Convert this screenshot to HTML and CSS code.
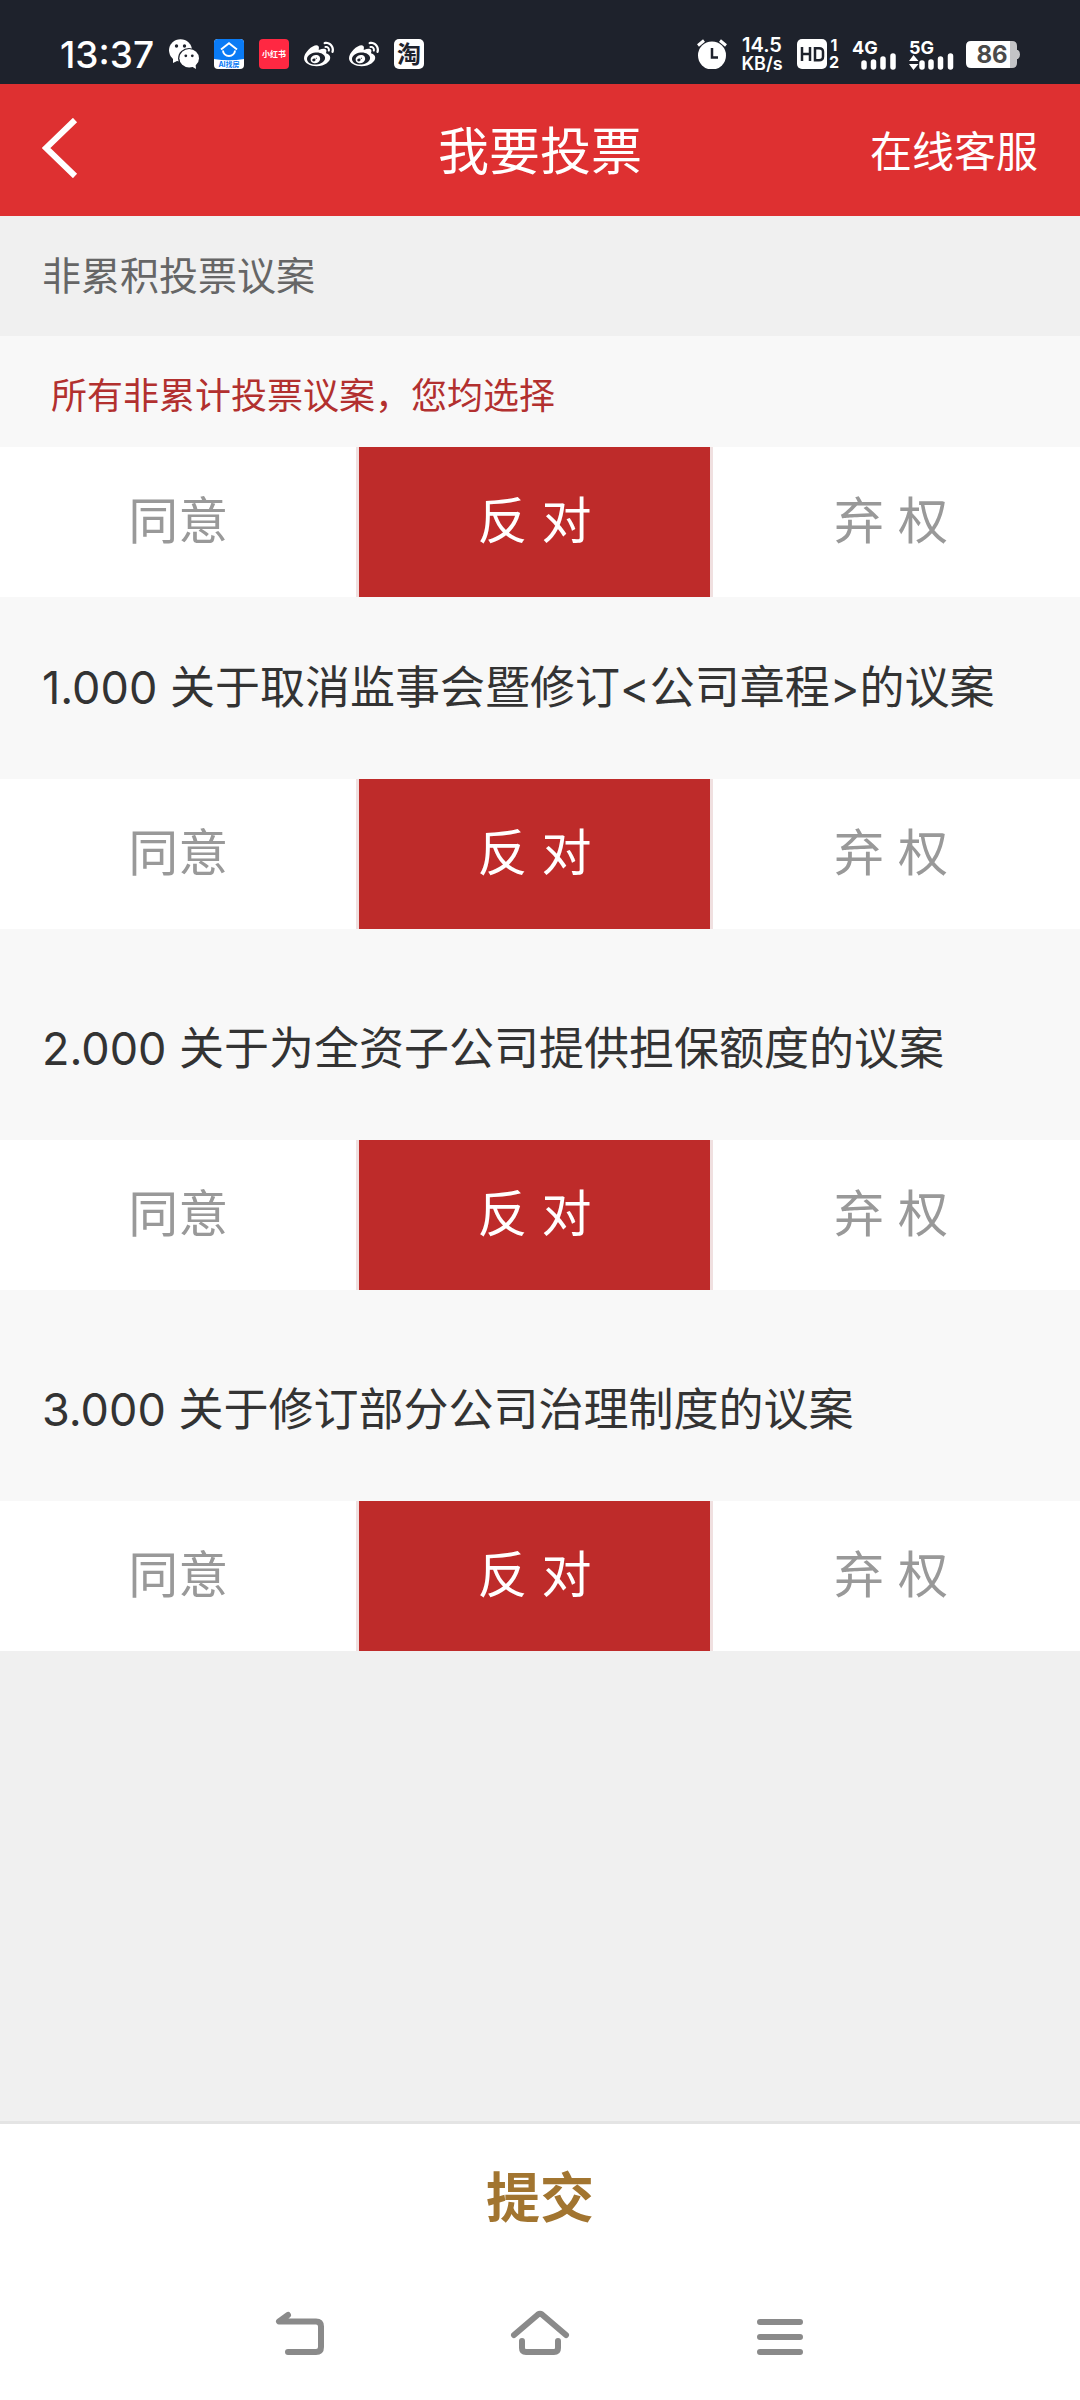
FILE: index.html
```html
<!DOCTYPE html>
<html lang="zh-CN">
<head>
    <meta charset="UTF-8">
    <meta name="viewport" content="width=device-width, initial-scale=1.0">
    <title>我要投票</title>
    <link rel="stylesheet" href="styles.css">
</head>
<body>
    <div class="status-bar">
        <div class="status-left">
            <span class="clock">13:37</span>
            <svg class="app-icon" viewBox="0 0 30 30">
                <path fill="#fff" d="M4 18l0 6 6-3z"/>
                <ellipse cx="11.5" cy="11.3" rx="11.5" ry="11.1" fill="#fff"/>
                <circle cx="7.5" cy="7" r="1.7" fill="#1e222c"/>
                <circle cx="15.5" cy="7" r="1.7" fill="#1e222c"/>
                <ellipse cx="20" cy="19.3" rx="10.9" ry="10.3" fill="#1e222c"/>
                <path fill="#fff" d="M22 27l5 3-.5-5z"/>
                <ellipse cx="20.2" cy="19.3" rx="9.8" ry="9.2" fill="#fff"/>
                <circle cx="16.8" cy="16.8" r="1.4" fill="#1e222c"/>
                <circle cx="23.3" cy="16.8" r="1.4" fill="#1e222c"/>
            </svg>
            <svg class="app-icon" viewBox="0 0 30 30">
                <rect width="30" height="30" rx="4" fill="#fff"/>
                <path fill="#0a7bf5" d="M4 0h22a4 4 0 0 1 4 4v16q-15 2.500-30 0V4a4 4 0 0 1 4-4z"/>
                <path d="M7 10.500l8-6.300 8 6.300M9 11.500a6 5.500 0 0 0 12 0" fill="none" stroke="#fff" stroke-width="1.900"/>
                <text x="15" y="28" class="label-ai">AI找房</text>
            </svg>
            <svg class="app-icon" viewBox="0 0 30 30">
                <rect width="30" height="30" rx="4" fill="#ff2842"/>
                <text x="15" y="18" class="label-red">小红书</text>
            </svg>
            <svg class="app-icon" viewBox="0 0 24 24">
                <path id="weibo" fill="#fff" d="M10.098 20.323c-3.977.391-7.414-1.406-7.672-4.020-.259-2.609 2.759-5.047 6.740-5.441 3.979-.394 7.413 1.404 7.671 4.018.259 2.600-2.759 5.049-6.737 5.439l-.002.004zM9.050 17.219c-.384.616-1.208.884-1.829.602-.612-.279-.793-.991-.406-1.593.379-.595 1.176-.861 1.793-.601.622.263.820.972.442 1.592zm1.270-1.627c-.141.237-.449.353-.689.253-.236-.090-.313-.361-.177-.586.138-.227.436-.346.672-.240.239.090.315.360.180.601l.014-.028zm.176-2.719c-1.893-.493-4.033.450-4.857 2.118-.836 1.704-.026 3.591 1.886 4.210 1.983.640 4.318-.341 5.132-2.179.800-1.793-.201-3.642-2.161-4.149zm7.563-1.224c-.346-.105-.570-.180-.405-.615.375-.977.420-1.804 0-2.404-.781-1.112-2.915-1.053-5.364-.030 0 0-.766.331-.571-.271.376-1.217.315-2.224-.270-2.809-1.338-1.337-4.869.045-7.888 3.080C1.309 10.870 0 13.273 0 15.348c0 3.981 5.099 6.395 10.086 6.395 6.536 0 10.888-3.801 10.888-6.820 0-1.822-1.547-2.854-2.915-3.284v.010zm1.908-5.092c-.766-.856-1.908-1.187-2.960-.962-.436.090-.706.511-.616.932.090.420.511.691.932.602.511-.105 1.067.044 1.442.465.376.421.466.977.316 1.473-.136.406.089.856.510.992.405.119.857-.105.992-.512.330-1.021.120-2.178-.646-3.035l.030.045zm2.418-2.195c-1.576-1.757-3.905-2.419-6.054-1.968-.496.104-.812.587-.706 1.081.104.496.586.813 1.082.707 1.532-.331 3.185.150 4.296 1.383 1.112 1.246 1.429 2.943.947 4.416-.165.480.106 1.007.586 1.157.479.165.991-.104 1.157-.586.675-2.088.241-4.478-1.338-6.235l.030.045z"/>
            </svg>
            <svg class="app-icon" viewBox="0 0 24 24"><use href="#weibo"/></svg>
            <svg class="app-icon" viewBox="0 0 30 30">
                <rect width="30" height="30" rx="5" fill="#fff"/>
                <text x="15" y="24" class="label-tao">淘</text>
            </svg>
        </div>
        <div class="status-right">
            <svg class="app-icon" viewBox="0 0 30 30">
                <circle cx="15" cy="16.500" r="14" fill="#fff"/>
                <path d="M1 6.500l6-5M29 6.500l-6-5" stroke="#fff" stroke-width="3"/>
                <path d="M15 9v9.500h6" fill="none" stroke="#1e222c" stroke-width="2.500"/>
            </svg>
            <div class="net-speed"><span>14.5</span><span class="unit">KB/s</span></div>
            <svg class="hd-icon" viewBox="0 0 43 36">
                <rect y="3" width="30" height="30" rx="5" fill="#fff"/>
                <path d="M5 11v14M13 11v14M5 18h8M18 12.200h4q4 0 4 3.500v5q0 3.500-4 3.500h-4z" fill="none" stroke="#1e222c" stroke-width="2.500"/>
                <text x="37" y="15" class="label-sim">1</text>
                <text x="37" y="32" class="label-sim">2</text>
            </svg>
            <svg class="signal" viewBox="0 0 45 36">
                <text x="0" y="18" class="label-net">4G</text>
                <path d="M12 27v4M21.500 26v5M31 23v8M41 20v11" stroke="#fff" stroke-width="5.500" stroke-linecap="round"/>
            </svg>
            <svg class="signal" viewBox="0 0 45 36">
                <text x="0" y="18" class="label-net">5G</text>
                <path d="M4.500 19l5 6H0zM4.500 34l5-6H0z" fill="#fff"/>
                <path d="M13 27v4M22 26v5M31.500 23v8M41.500 20v11" stroke="#fff" stroke-width="5.500" stroke-linecap="round"/>
            </svg>
            <svg class="battery" viewBox="0 0 54 27">
                <path fill="#c3c4c7" d="M42 0h4q5 0 5 5v4h1q2 1 2 4.500T52 18h-1v4q0 5-5 5h-4z"/>
                <path fill="#fff" d="M5 0h39v27H5q-5 0-5-5V5q0-5 5-5z"/>
                <text x="26" y="22" class="label-battery">86</text>
            </svg>
        </div>
    </div>

    <header class="header">
        <a href="#" class="back" aria-label="返回">
            <svg viewBox="0 0 38 60">
                <path d="M33 2L4 30l29 28" fill="none" stroke="#fff" stroke-width="6"/>
            </svg>
        </a>
        <h1>我要投票</h1>
        <a href="#" class="service">在线客服</a>
    </header>

    <main>
        <form id="voteForm">
            <h2 class="section-title">非累积投票议案</h2>
            <section>
                <p class="notice">所有非累计投票议案，您均选择</p>
                <div class="options">
                    <input type="radio" id="all1" name="all"><label for="all1">同意</label>
                    <input type="radio" id="all2" name="all" checked><label for="all2">反 对</label>
                    <input type="radio" id="all3" name="all"><label for="all3">弃 权</label>
                </div>
            </section>
            <section class="proposal">
                <h3>1.000 关于取消监事会暨修订&lt;公司章程&gt;的议案</h3>
                <div class="options">
                    <input type="radio" id="a1" name="a"><label for="a1">同意</label>
                    <input type="radio" id="a2" name="a" checked><label for="a2">反 对</label>
                    <input type="radio" id="a3" name="a"><label for="a3">弃 权</label>
                </div>
            </section>
            <section class="proposal">
                <h3>2.000 关于为全资子公司提供担保额度的议案</h3>
                <div class="options">
                    <input type="radio" id="b1" name="b"><label for="b1">同意</label>
                    <input type="radio" id="b2" name="b" checked><label for="b2">反 对</label>
                    <input type="radio" id="b3" name="b"><label for="b3">弃 权</label>
                </div>
            </section>
            <section class="proposal">
                <h3>3.000 关于修订部分公司治理制度的议案</h3>
                <div class="options">
                    <input type="radio" id="c1" name="c"><label for="c1">同意</label>
                    <input type="radio" id="c2" name="c" checked><label for="c2">反 对</label>
                    <input type="radio" id="c3" name="c"><label for="c3">弃 权</label>
                </div>
            </section>
        </form>
    </main>

    <button type="submit" form="voteForm" class="submit">提交</button>

    <nav class="nav-bar">
        <button type="button" aria-label="返回">
            <svg viewBox="0 0 60 60">
                <path d="M18 12L9 18.500h37q5 0 5 5V44q0 5-5 5H18"/>
            </svg>
        </button>
        <button type="button" aria-label="主页">
            <svg viewBox="0 0 60 60">
                <path d="M4 32L28 11.500q2-1.500 4 0L56 32M12 38v7q0 4 4 4h28q4 0 4-4v-7"/>
            </svg>
        </button>
        <button type="button" aria-label="菜单">
            <svg viewBox="0 0 60 60">
                <path d="M10 19h40M10 34h40M10 49h40"/>
            </svg>
        </button>
    </nav>
</body>
</html>
```
FILE: styles.css
```css
* {
    box-sizing: border-box;
}
body {
    margin: 0;
    min-height: 100vh;
    display: flex;
    flex-direction: column;
    font-family: Inter, "Noto Sans CJK SC", sans-serif;
    background-color: #f0f0f0;
    color: #333;
}
h1, h2, h3, p {
    margin: 0;
    font-weight: 400;
}
svg {
    display: block;
}

/* phone status bar */
.status-bar {
    display: flex;
    justify-content: space-between;
    height: 84px;
    padding: 24px 60px 0;
    background-color: #1e222c;
    color: #fff;
}
.status-left,
.status-right {
    display: flex;
    align-items: center;
    height: 60px;
}
.status-left {
    gap: 15px;
}
.status-right {
    gap: 12px;
}
.clock {
    font-size: 37px;
    font-weight: 500;
}
.app-icon {
    width: 30px;
    height: 30px;
}
.net-speed {
    display: flex;
    flex-direction: column;
    align-items: center;
    width: 46px;
    font-size: 20px;
    font-weight: 600;
    line-height: 20px;
}
.net-speed .unit {
    font-size: 18px;
    line-height: 18px;
}
.hd-icon {
    width: 43px;
    height: 36px;
}
.signal {
    width: 45px;
    height: 36px;
}
.battery {
    width: 54px;
    height: 27px;
}
.label-ai,
.label-red,
.label-tao,
.label-sim,
.label-battery {
    text-anchor: middle;
    font-weight: 700;
}
.label-ai {
    font-size: 7px;
    fill: #0a7bf5;
}
.label-red {
    font-size: 8px;
    fill: #fff;
}
.label-tao {
    font-size: 24px;
    fill: #1e222c;
}
.label-sim {
    font-size: 16px;
    fill: #fff;
}
.label-net {
    font-size: 18px;
    font-weight: 700;
    fill: #fff;
}
.label-battery {
    font-size: 24px;
    fill: #4a4a4a;
}

/* title bar */
.header {
    display: grid;
    grid-template-columns: 1fr auto 1fr;
    align-items: center;
    height: 132px;
    padding: 0 42px 4px;
    background-color: #de3031;
    color: #fff;
}
.header h1 {
    font-size: 51px;
}
.back svg {
    width: 38px;
    height: 60px;
}
.service {
    justify-self: end;
    color: #fff;
    font-size: 42px;
    text-decoration: none;
}

/* vote form */
main {
    flex: 1;
}
.section-title {
    padding: 0 42px;
    font-size: 39px;
    line-height: 120px;
    color: #666;
}
.notice {
    padding: 10px 51px 0;
    font-size: 36px;
    line-height: 101px;
    color: #b2302f;
    background-color: #f8f8f8;
}
.proposal h3 {
    padding: 0 42px;
    font-size: 45px;
    line-height: 182px;
    background-color: #f8f8f8;
}
.proposal + .proposal {
    padding-top: 29px;
    background-color: #f8f8f8;
}
.options {
    display: flex;
    background-color: #fff;
}
.options input {
    appearance: none;
    width: 0;
    margin: 0;
}
.options label {
    width: 33%;
    padding-bottom: 2px;
    border: 0 solid #f0e0e0;
    font-size: 50px;
    line-height: 148px;
    text-align: center;
    color: #999;
    cursor: pointer;
}
.options input:checked + label {
    border-width: 0 3px;
    background-color: #be2b2a;
    background-clip: padding-box;
    color: #fff;
}

.submit {
    border: none;
    border-top: 3px solid #e4e4e4;
    padding: 2px 0 0;
    background-color: #fff;
    color: #a27530;
    font-family: inherit;
    font-size: 54px;
    font-weight: 700;
    line-height: 145px;
    cursor: pointer;
}

/* phone navigation keys */
.nav-bar {
    display: flex;
    justify-content: center;
    gap: 180px;
    height: 129px;
    padding-top: 32px;
    background-color: #fff;
}
.nav-bar button {
    width: 60px;
    height: 60px;
    padding: 0;
    border: none;
    background: none;
}
.nav-bar path {
    fill: none;
    stroke: #8a8a8a;
    stroke-width: 6;
    stroke-linecap: round;
    stroke-linejoin: round;
}
```
